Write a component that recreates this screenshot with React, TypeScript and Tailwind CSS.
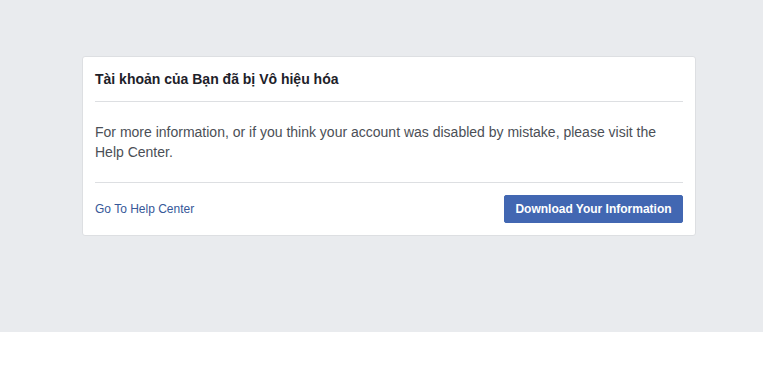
export default function App() {
  return (
    <div className="min-h-[389px] bg-white" style={{ fontFamily: '"Liberation Sans", Arial, sans-serif' }}>
      <div className="h-[332px] bg-[#e9ebee] pt-[56px] pl-[82px]">
        <div className="w-[614px] h-[180px] bg-white border border-[#dddfe2] rounded-[3px] px-[12px] flex flex-col">
          <div className="h-[45px] shrink-0 flex items-center border-b border-[#dddfe2]">
            <span className="text-[14px] font-bold text-[#1d2129] leading-[18px]">Tài khoản của Bạn đã bị Vô hiệu hóa</span>
          </div>
          <div className="h-[81px] shrink-0 flex items-center border-b border-[#dddfe2]">
            <p className="text-[14px] leading-[20px] text-[#4b4f56]">
              For more information, or if you think your account was disabled by mistake, please visit the Help Center.
            </p>
          </div>
          <div className="flex-1 flex items-center justify-between">
            <span className="text-[12px] text-[#365899]">Go To Help Center</span>
            <button className="h-[28px] w-[179px] bg-[#4267b2] border border-[#4267b2] rounded-[2px] text-white text-[12px] font-bold">
              Download Your Information
            </button>
          </div>
        </div>
      </div>
    </div>
  );
}
